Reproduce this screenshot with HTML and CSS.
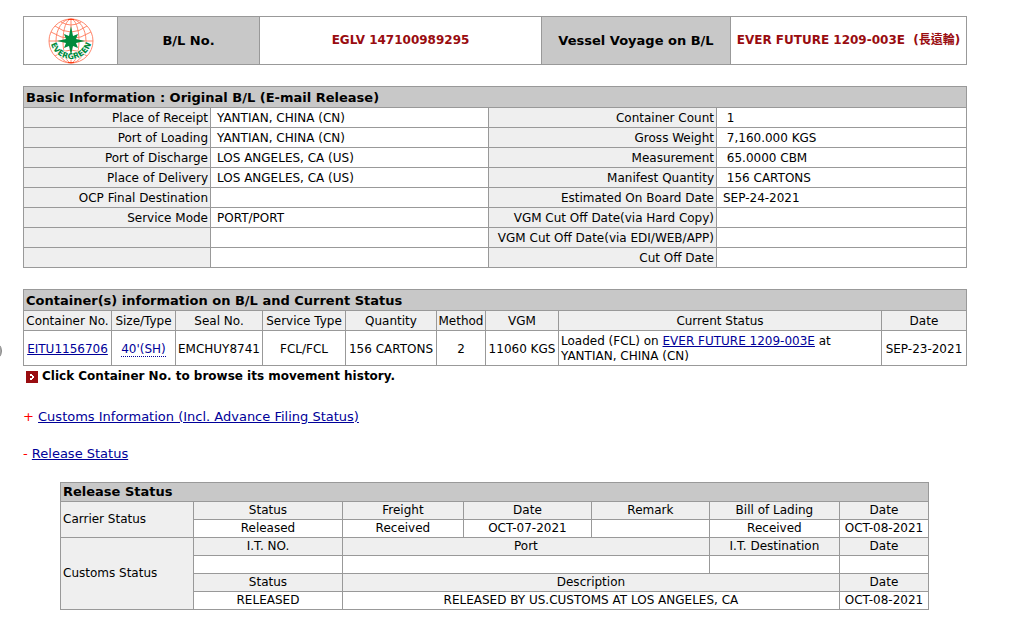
FILE: index.html
```html
<!DOCTYPE html>
<html lang="en">
<head>
    <meta charset="UTF-8">
    <meta name="viewport" content="width=device-width, initial-scale=1.0">
    <title>Cargo Tracking - EGLV 147100989295</title>
    <link rel="stylesheet" href="styles.css">
</head>
<body>
    <span class="side-handle"></span>

    <!-- B/L header -->
    <table class="bl-header">
        <colgroup>
            <col class="w-logo"><col class="w-blno"><col><col class="w-voyage"><col class="w-vessel">
        </colgroup>
        <tr>
            <td>
                <svg class="logo" viewBox="0 0 46 46" role="img" aria-label="Evergreen">
                    <g fill="none" stroke="#ff7a5c" stroke-width="0.9">
                        <circle cx="23" cy="23" r="22"/>
                        <ellipse cx="23" cy="23" rx="15" ry="22"/>
                        <ellipse cx="23" cy="23" rx="8" ry="22"/>
                        <path d="M23 1V45M1 23H45M7 8Q23 20 39 8M3 14Q23 27 43 14M7 38Q23 26 39 38M13 4Q23 10 33 4"/>
                    </g>
                    <path d="M20 1h6v1h-6zM20 44h6v1h-6z" fill="#ff3c14"/>
                    <path id="logo-arc" d="M2 20A21 21 0 1 0 44 20" fill="none"/>
                    <text class="logo-text"><textPath href="#logo-arc" startOffset="50%">EVERGREEN</textPath></text>
                    <path d="M23 8L25 18L30 16L28 21L37 23L28 25L30 30L25 28L23 37L21 28L16 30L18 25L9 23L18 21L16 16L21 18Z" fill="#008a3c"/>
                </svg>
            </td>
            <th scope="row">B/L No.</th>
            <td class="red">EGLV 147100989295</td>
            <th scope="row">Vessel Voyage on B/L</th>
            <td class="red">EVER FUTURE 1209-003E&nbsp;&nbsp;(長遠輪)</td>
        </tr>
    </table>

    <!-- Basic information -->
    <table class="basic">
        <colgroup>
            <col class="w-label"><col><col class="w-label2"><col class="w-value2">
        </colgroup>
        <tr><th class="title" colspan="4">Basic Information : Original B/L (E-mail Release)</th></tr>
        <tr><th scope="row">Place of Receipt</th><td>YANTIAN, CHINA (CN)</td><th scope="row">Container Count</th><td>&nbsp;1</td></tr>
        <tr><th scope="row">Port of Loading</th><td>YANTIAN, CHINA (CN)</td><th scope="row">Gross Weight</th><td>&nbsp;7,160.000 KGS</td></tr>
        <tr><th scope="row">Port of Discharge</th><td>LOS ANGELES, CA (US)</td><th scope="row">Measurement</th><td>&nbsp;65.0000 CBM</td></tr>
        <tr><th scope="row">Place of Delivery</th><td>LOS ANGELES, CA (US)</td><th scope="row">Manifest Quantity</th><td>&nbsp;156 CARTONS</td></tr>
        <tr><th scope="row">OCP Final Destination</th><td></td><th scope="row">Estimated On Board Date</th><td>SEP-24-2021</td></tr>
        <tr><th scope="row">Service Mode</th><td>PORT/PORT</td><th scope="row">VGM Cut Off Date(via Hard Copy)</th><td></td></tr>
        <tr><th>&nbsp;</th><td></td><th scope="row">VGM Cut Off Date(via EDI/WEB/APP)</th><td></td></tr>
        <tr><th>&nbsp;</th><td></td><th scope="row">Cut Off Date</th><td></td></tr>
    </table>

    <!-- Containers -->
    <table class="containers">
        <colgroup>
            <col class="w-cno"><col class="w-size"><col class="w-seal"><col class="w-service"><col class="w-qty"><col class="w-method"><col class="w-vgm"><col><col class="w-date">
        </colgroup>
        <tr><th class="title" colspan="9">Container(s) information on B/L and Current Status</th></tr>
        <tr>
            <th>Container No.</th>
            <th>Size/Type</th>
            <th>Seal No.</th>
            <th>Service Type</th>
            <th>Quantity</th>
            <th>Method</th>
            <th>VGM</th>
            <th>Current Status</th>
            <th>Date</th>
        </tr>
        <tr>
            <td><a href="#">EITU1156706</a></td>
            <td><a href="#" class="dotted">40'(SH)</a></td>
            <td>EMCHUY8741</td>
            <td>FCL/FCL</td>
            <td>156 CARTONS</td>
            <td>2</td>
            <td>11060 KGS</td>
            <td class="status">Loaded (FCL) on <a href="#">EVER FUTURE 1209-003E</a> at YANTIAN, CHINA (CN)</td>
            <td>SEP-23-2021</td>
        </tr>
    </table>
    <p class="hint">
        <svg class="bullet" viewBox="0 0 12 12" aria-hidden="true">
            <rect width="12" height="12" fill="#990c10"/>
            <path d="M4 3h2v1h1v1h1v2h-1v1h-1v1h-2v-2h2v-2h-2z" fill="#fff"/>
        </svg>
        <span>Click Container No. to browse its movement history.</span>
    </p>

    <p class="toggle"><span>+</span> <a href="#">Customs Information (Incl. Advance Filing Status)</a></p>
    <p class="toggle"><span>-</span> <a href="#">Release Status</a></p>

    <!-- Release status -->
    <div class="release-wrap">
        <table class="release">
            <colgroup>
                <col class="w-group"><col><col class="w-freight"><col class="w-rdate"><col class="w-remark"><col class="w-lading"><col class="w-last">
            </colgroup>
            <tr><th class="title" colspan="7">Release Status</th></tr>
            <tr>
                <th class="group" rowspan="2">Carrier Status</th>
                <th>Status</th><th>Freight</th><th>Date</th><th>Remark</th><th>Bill of Lading</th><th>Date</th>
            </tr>
            <tr><td>Released</td><td>Received</td><td>OCT-07-2021</td><td></td><td>Received</td><td>OCT-08-2021</td></tr>
            <tr>
                <th class="group" rowspan="4">Customs Status</th>
                <th>I.T. NO.</th><th colspan="3">Port</th><th>I.T. Destination</th><th>Date</th>
            </tr>
            <tr><td>&nbsp;</td><td colspan="3"></td><td></td><td></td></tr>
            <tr><th>Status</th><th colspan="4">Description</th><th>Date</th></tr>
            <tr><td>RELEASED</td><td colspan="4">RELEASED BY US.CUSTOMS AT LOS ANGELES, CA</td><td>OCT-08-2021</td></tr>
        </table>
    </div>
</body>
</html>
```
FILE: styles.css
```css
body {
    margin: 0;
    padding: 16px 67px 12px 23px;
    background-color: #fff;
    color: #000;
    font-family: Verdana, "DejaVu Sans", "Noto Sans CJK TC", sans-serif;
    font-size: 12px;
    line-height: 15px;
}

a {
    color: #000099;
}

table {
    width: 100%;
    table-layout: fixed;
    border-collapse: collapse;
    margin-bottom: 21px;
}

th,
td {
    border: 1px solid #999;
    padding: 3px 0 1px;
    font-weight: normal;
    text-align: center;
    white-space: nowrap;
}

th {
    background-color: #efefef;
}

th.title {
    background-color: #c8c8c8;
    padding-left: 2px;
    font-size: 13px;
    font-weight: bold;
    line-height: 16px;
    text-align: left;
}

/* B/L header */
.bl-header th,
.bl-header td {
    height: 47px;
    padding: 0;
    font-weight: bold;
}

.bl-header th {
    background-color: #c8c8c8;
    font-size: 13px;
}

.bl-header .red {
    color: #990c10;
}

.logo {
    display: block;
    width: 46px;
    height: 46px;
    margin: 0 auto;
}

.logo-text {
    font-family: "DejaVu Sans", Verdana, sans-serif;
    font-size: 8px;
    font-weight: bold;
    text-anchor: middle;
    fill: #008a3c;
    stroke: #fff;
    stroke-width: 1px;
    paint-order: stroke;
}

.w-logo { width: 94px; }
.w-blno { width: 142px; }
.w-voyage { width: 189px; }
.w-vessel { width: 236px; }

/* Basic information */
.basic th {
    padding-right: 2px;
    text-align: right;
}

.basic th.title {
    text-align: left;
}

.basic td {
    padding-left: 6px;
    text-align: left;
}

.w-label { width: 187px; }
.w-label2 { width: 228px; }
.w-value2 { width: 250px; }

/* Containers */
.containers {
    margin-bottom: 0;
}

.containers .status {
    padding-left: 2px;
    text-align: left;
    white-space: normal;
}

.dotted {
    border-bottom: 1px dotted #000099;
    text-decoration: none;
}

.w-cno { width: 88px; }
.w-size { width: 64px; }
.w-seal { width: 87px; }
.w-service { width: 83px; }
.w-qty { width: 91px; }
.w-method { width: 49px; }
.w-vgm { width: 73px; }
.w-date { width: 85px; }

.hint {
    display: flex;
    align-items: center;
    gap: 4px;
    margin: 3px 0 25px;
    padding-left: 3px;
    font-weight: bold;
}

.bullet {
    width: 12px;
    height: 12px;
}

.toggle {
    margin: 0 0 21px;
    font-size: 13px;
    line-height: 16px;
}

.toggle:last-of-type {
    margin-bottom: 20px;
}

.toggle span {
    color: #ff0000;
}

/* Release status */
.release-wrap {
    padding: 0 38px 0 37px;
}

.release {
    margin-bottom: 0;
}

.release th,
.release td {
    padding-top: 1px;
    padding-bottom: 1px;
}

.release .group {
    padding-left: 2px;
    text-align: left;
}

.w-group { width: 133px; }
.w-freight { width: 121px; }
.w-rdate { width: 128px; }
.w-remark { width: 118px; }
.w-lading { width: 130px; }
.w-last { width: 89px; }

/* round handle peeking in from the left edge */
.side-handle {
    position: absolute;
    top: 341px;
    left: -18px;
    width: 18px;
    height: 18px;
    border: 1px solid #888;
    border-radius: 50%;
    background-color: #aaa;
}
```
